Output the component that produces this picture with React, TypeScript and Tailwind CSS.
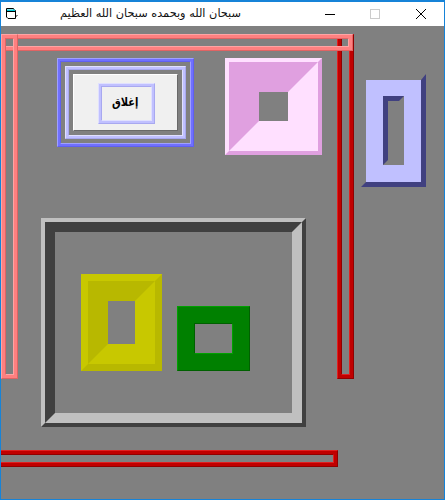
import React from "react";

type RidgeProps = { outer: string; mid: string; inner: string; className?: string; children?: React.ReactNode };

function Ridge({ outer, mid, inner, className = "", children }: RidgeProps) {
  return (
    <div className={`border border-solid flex ${outer} ${className}`}>
      <div className={`flex-1 border-solid flex ${mid}`}>
        <div className={`flex-1 border border-solid flex ${inner}`}>{children}</div>
      </div>
    </div>
  );
}

const pink = {
  outer: "border-t-[#ffa4a4] border-l-[#ffa4a4] border-r-[#e06464] border-b-[#e06464]",
  mid: "border-[3px] border-[#ff8080]",
  inner: "border-t-[#e06464] border-l-[#e06464] border-r-[#ffa4a4] border-b-[#ffa4a4]",
};
const red = {
  outer: "border-t-[#e02020] border-l-[#e02020] border-r-[#900000] border-b-[#900000]",
  mid: "border-[3px] border-[#c00000]",
  inner: "border-t-[#900000] border-l-[#900000] border-r-[#e02020] border-b-[#e02020]",
};
const blue = {
  outer: "border-t-[#a0a0ff] border-l-[#a0a0ff] border-r-[#6060f0] border-b-[#6060f0]",
  mid: "border-[2px] border-[#7070ff]",
  inner: "border-t-[#6060f0] border-l-[#6060f0] border-r-[#a0a0ff] border-b-[#a0a0ff]",
};
const lilac = {
  outer: "border-t-[#e0e0ff] border-l-[#e0e0ff] border-r-[#a8a8f0] border-b-[#a8a8f0]",
  mid: "border-[2px] border-[#c0c0ff]",
  inner: "border-t-[#a8a8f0] border-l-[#a8a8f0] border-r-[#e0e0ff] border-b-[#e0e0ff]",
};

export default function App() {
  return (
    <div className="w-[445px] h-[500px] flex flex-col border border-t-2 border-[#1683d8] bg-[#808080] overflow-hidden">
      <header className="h-[24px] shrink-0 bg-white flex items-center relative">
        <svg width="16" height="16" viewBox="0 0 16 16" className="ml-[4px] shrink-0">
          <path d="M1.5 2.5H8.5L9.5 4.5H10.5V12.5H3L1.5 11Z" fill="#fff" stroke="#000" />
          <path d="M2 3.5H10V5.5H2Z" fill="#00c8d8" />
          <path d="M2 5.5H10.5" stroke="#000" />
          <path d="M11 9h2v1h-1v1h-1z" fill="#8a8a8a" />
        </svg>
        <span dir="rtl" className="ml-[39px] w-[181px] whitespace-nowrap text-[11.3px] leading-none text-[#111] font-['DejaVu_Sans',sans-serif]">
          سبحان الله وبحمده سبحان الله العظيم
        </span>
        <svg width="110" height="12" viewBox="0 0 110 12" className="absolute left-[323px] top-[6px]">
          <path d="M1 6.5h10" stroke="#000" />
          <rect x="46.5" y="1.5" width="9" height="9" fill="none" stroke="#ccc" />
          <path d="M92 1l10 10M102 1L92 11" stroke="#000" fill="none" />
        </svg>
      </header>

      <main className="relative flex-1 overflow-hidden pl-[40px] pt-[32px] flex flex-col items-start">
        {/* top row */}
        <div className="flex items-start pl-4">
          <Ridge {...blue} className="w-[137px] h-[89px]">
            <div className="flex-1 p-[4px] flex">
              <Ridge {...lilac} className="flex-1">
                <div className="flex-1 p-[4px] flex">
                  <button className="flex-1 bg-[#f0f0f0] border border-solid border-t-white border-l-white border-r-[#696969] border-b-[#696969] flex items-center justify-center pl-[1px] pt-[1px]">
                    <Ridge {...lilac} className="w-[57px] h-[41px]">
                      <div className="flex-1 flex items-center justify-center pb-[2px] pr-[1px]">
                        <span className="text-[12px] font-bold leading-none text-black scale-x-[0.82] font-['DejaVu_Sans',sans-serif]">إغلاق</span>
                      </div>
                    </Ridge>
                  </button>
                </div>
              </Ridge>
            </div>
          </Ridge>

          <div className="ml-[31px] w-[97px] h-[97px] border-[4px] border-solid border-t-[#ffe0ff] border-l-[#ffe0ff] border-r-[#e0a0e0] border-b-[#e0a0e0]">
            <div className="w-full h-full border-[30px] border-solid border-t-[#e0a0e0] border-l-[#e0a0e0] border-r-[#ffe0ff] border-b-[#ffe0ff]" />
          </div>

          <div className="ml-[39px] mt-[16px] w-[65px] h-[113px] border-solid border-t-[6px] border-l-[5px] border-r-[5px] border-b-[5px] border-t-transparent border-l-transparent border-r-[#404080] border-b-[#404080]">
            <div className="w-full h-full border-solid border-t-[16px] border-x-[17px] border-b-[17px] border-[#c0c0ff]">
              <div className="w-full h-full border-solid border-[5px] border-t-[#404080] border-l-[#404080] border-r-transparent border-b-transparent" />
            </div>
          </div>
        </div>

        {/* large frame */}
        <div className="mt-[31px] w-[265px] h-[209px] border-[4px] border-solid border-t-[#c0c0c0] border-l-[#c0c0c0] border-r-[#404040] border-b-[#404040]">
          <div className="w-full h-full border-[10px] border-solid border-t-[#404040] border-l-[#404040] border-r-[#c0c0c0] border-b-[#c0c0c0] pl-[26px] pt-[42px]">
            <div className="flex items-end gap-[15px]">
              <div className="w-[81px] h-[97px] border-[7px] border-solid border-t-[#c8c800] border-l-[#c8c800] border-r-[#b8b800] border-b-[#b8b800]">
                <div className="w-full h-full border-[20px] border-solid border-t-[#b8b800] border-l-[#b8b800] border-r-[#c8c800] border-b-[#c8c800]" />
              </div>
              <div className="w-[73px] h-[65px] border border-solid border-t-[#00a000] border-l-[#00a000] border-r-[#006000] border-b-[#006000]">
                <div className="w-full h-full border-[16px] border-solid border-[#008000]">
                  <div className="w-full h-full border border-solid border-t-[#006000] border-l-[#006000] border-r-[#00a000] border-b-[#00a000]" />
                </div>
              </div>
            </div>
          </div>
        </div>

        {/* long line frames lying over the rest */}
        <Ridge {...red} className="absolute left-[336px] top-[8px] w-[17px] h-[345px]" />
        <Ridge {...red} className="absolute left-[-10px] top-[424px] w-[347px] h-[17px]" />
        <Ridge {...pink} className="absolute left-[-10px] top-[8px] w-[362px] h-[17px]" />
        <Ridge {...pink} className="absolute left-0 top-[8px] w-[17px] h-[345px]" />
      </main>
    </div>
  );
}
